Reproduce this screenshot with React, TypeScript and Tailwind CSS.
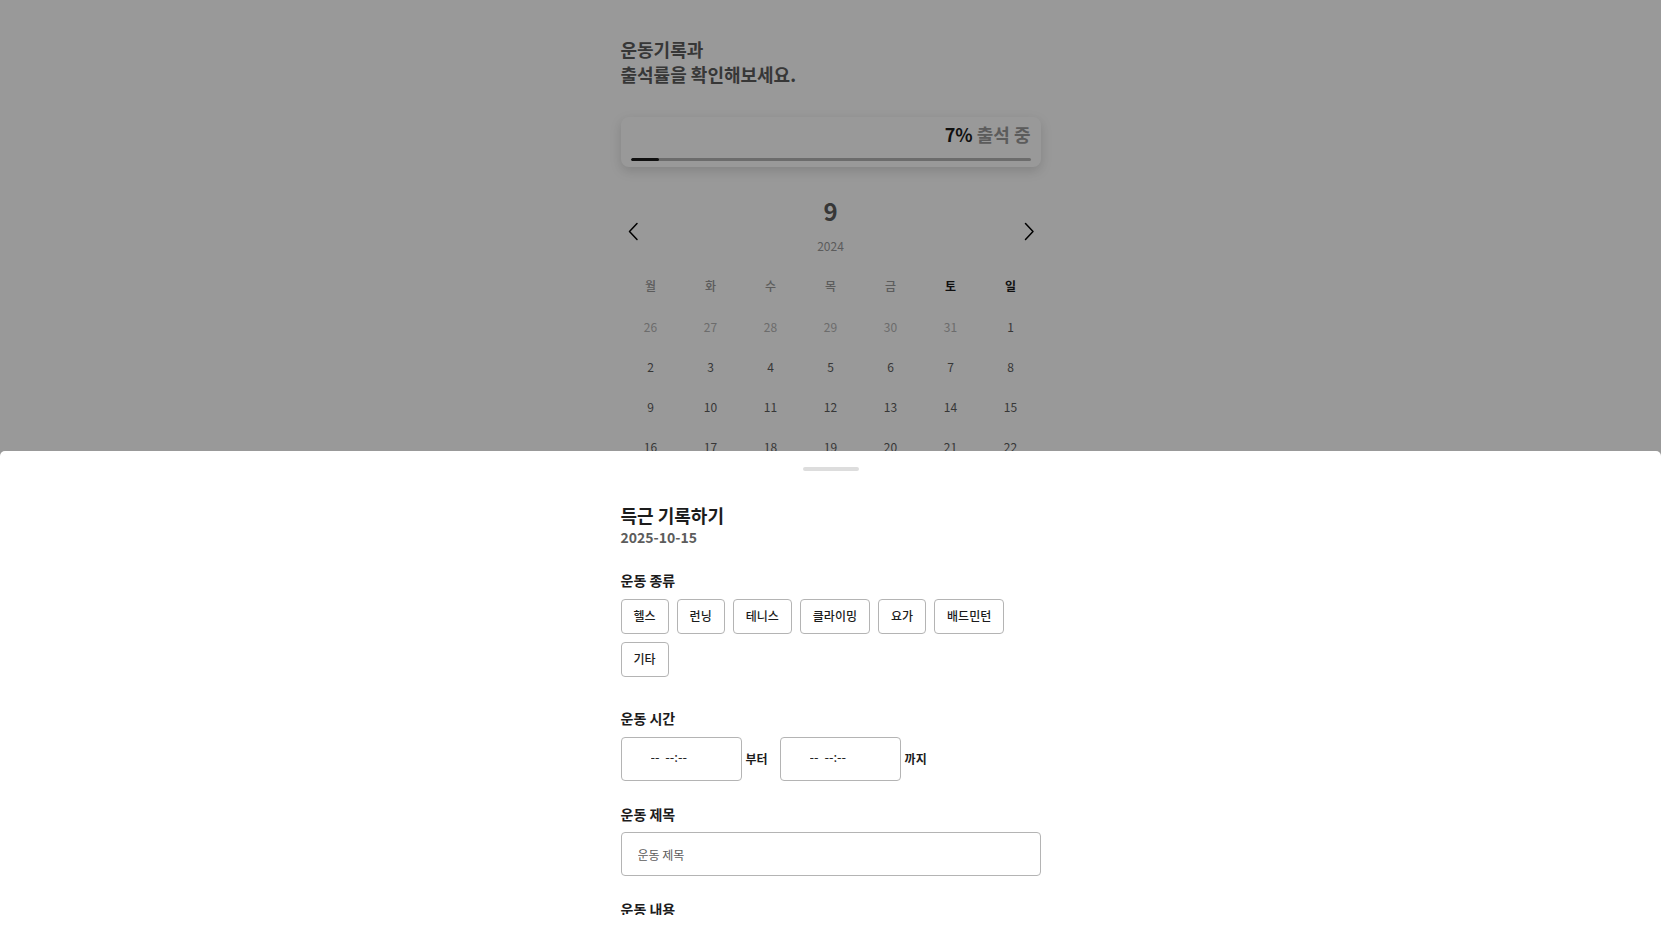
import { useState } from "react";

const weekdays = ["월", "화", "수", "목", "금", "토", "일"];
const weeks = [
  [26, 27, 28, 29, 30, 31, 1],
  [2, 3, 4, 5, 6, 7, 8],
  [9, 10, 11, 12, 13, 14, 15],
  [16, 17, 18, 19, 20, 21, 22],
  [23, 24, 25, 26, 27, 28, 29],
];
const sports = ["헬스", "런닝", "테니스", "클라이밍", "요가", "배드민턴", "기타"];

function Attendance({ percent }: { percent: number }) {
  return (
    <section className="mt-[30px] flex h-[50px] flex-col rounded-lg bg-white px-2.5 shadow-[0_4px_12px_rgba(0,0,0,0.15)]">
      <p className="mt-[5px] text-right text-lg leading-6 font-semibold text-[#999999]">
        <strong className="font-semibold text-[#1c1c1c]">{percent}%</strong> 출석 중
      </p>
      <div className="mt-3 h-[3px] overflow-hidden rounded-full bg-[#b4b4b4]">
        <div className="h-full rounded-full bg-[#1c1c1c]" style={{ width: `${percent}%` }} />
      </div>
    </section>
  );
}

function Arrow({ points, label }: { points: string; label: string }) {
  return (
    <button type="button" aria-label={label} className="flex size-6 items-center justify-center">
      <svg viewBox="0 0 24 24" className="size-6" fill="none" stroke="#000" strokeWidth="1.5" strokeLinecap="round" strokeLinejoin="round">
        <polyline points={points} />
      </svg>
    </button>
  );
}

function Calendar() {
  return (
    <section className="mt-7">
      <header className="flex h-[71px] items-center justify-between">
        <Arrow label="이전 달" points="16,4.5 8.5,12.5 16,20.5" />
        <div className="h-full text-center">
          <h2 className="text-2xl leading-8 font-semibold text-[#5c5c5c]">9</h2>
          <p className="mt-[9px] text-xs leading-5 text-[#999999]">2024</p>
        </div>
        <Arrow label="다음 달" points="9.5,4.5 17,12.5 9.5,20.5" />
      </header>
      <table className="w-full table-fixed border-collapse text-center text-xs text-[#5c5c5c]">
        <thead>
          <tr>
            {weekdays.map((day, i) => (
              <th
                key={day}
                scope="col"
                className={i > 4 ? "h-[41px] p-0 pb-px font-bold text-[#1c1c1c]" : "h-[41px] p-0 pb-px font-medium text-[#999999]"}
              >
                {day}
              </th>
            ))}
          </tr>
        </thead>
        <tbody>
          {weeks.map((week, w) => (
            <tr key={w}>
              {week.map((date) => (
                <td key={date} className={w === 0 && date > 20 ? "h-10 p-0 text-[#b4b4b4]" : "h-10 p-0"}>
                  {date}
                </td>
              ))}
            </tr>
          ))}
        </tbody>
      </table>
    </section>
  );
}

function TimeField({ id, suffix }: { id: string; suffix: string }) {
  return (
    <div className="flex items-center gap-1">
      <input
        id={id}
        type="text"
        inputMode="numeric"
        placeholder={"--\u00a0\u00a0--:--"}
        className="h-11 w-[121px] rounded border border-[#b4b4b4] pr-4 pb-1.5 pl-[29px] text-[13px] text-[#1c1c1c] placeholder:text-[#1c1c1c]"
      />
      <label htmlFor={id} className="text-xs font-bold">
        {suffix}
      </label>
    </div>
  );
}

function RecordSheet() {
  const [selected, setSelected] = useState<string | null>(null);
  return (
    <div className="fixed inset-0 flex flex-col justify-end bg-black/40">
      <div
        role="dialog"
        aria-modal="true"
        aria-labelledby="sheet-title"
        className="flex h-[calc(50vh+13px)] flex-col rounded-t-[5px] bg-white pt-4 pb-[13px] text-[#1c1c1c]"
      >
        <div className="mx-auto h-1 w-14 shrink-0 rounded-full bg-[#dddddd]" />
        <form className="mt-8 min-h-0 flex-1 overflow-hidden">
          <div className="mx-auto max-w-[420px]">
            <h2 id="sheet-title" className="text-lg leading-6 font-bold">
              득근 기록하기
            </h2>
            <p className="text-sm leading-5 font-semibold text-[#5c5c5c]">2025-10-15</p>

            <fieldset className="mt-[23px]">
              <legend className="text-sm leading-5 font-bold">운동 종류</legend>
              <div className="mt-[9px] flex flex-wrap gap-2">
                {sports.map((sport) => (
                  <button
                    key={sport}
                    type="button"
                    aria-pressed={selected === sport}
                    onClick={() => setSelected(sport)}
                    className="h-[35px] rounded border border-[#b4b4b4] px-3 pb-0.5 text-xs font-medium aria-pressed:bg-[#1c1c1c] aria-pressed:text-white"
                  >
                    {sport}
                  </button>
                ))}
              </div>
            </fieldset>

            <fieldset className="mt-[31px]">
              <legend className="text-sm leading-5 font-bold">운동 시간</legend>
              <div className="mt-[9px] flex gap-3">
                <TimeField id="start" suffix="부터" />
                <TimeField id="end" suffix="까지" />
              </div>
            </fieldset>

            <div className="mt-[23px]">
              <label htmlFor="title" className="block text-sm leading-5 font-bold">
                운동 제목
              </label>
              <input
                id="title"
                type="text"
                placeholder="운동 제목"
                className="mt-2 block h-11 w-full rounded border border-[#b4b4b4] px-4 text-xs placeholder:text-[#5c5c5c]"
              />
            </div>

            <div className="mt-[23px]">
              <label htmlFor="content" className="block text-sm leading-5 font-bold">
                운동 내용
              </label>
              <textarea id="content" className="mt-2 block h-24 w-full resize-none rounded border border-[#b4b4b4] p-4 text-xs" />
            </div>
          </div>
        </form>
      </div>
    </div>
  );
}

export default function App() {
  return (
    <div className="h-screen overflow-hidden bg-white font-['Noto_Sans_CJK_KR',sans-serif]">
      <main className="mx-auto max-w-[420px] pt-[37px]">
        <h1 className="text-lg leading-[25px] font-semibold text-[#5c5c5c]">
          운동기록과
          <br />
          출석률을 확인해보세요.
        </h1>
        <Attendance percent={7} />
        <Calendar />
      </main>
      <RecordSheet />
    </div>
  );
}
